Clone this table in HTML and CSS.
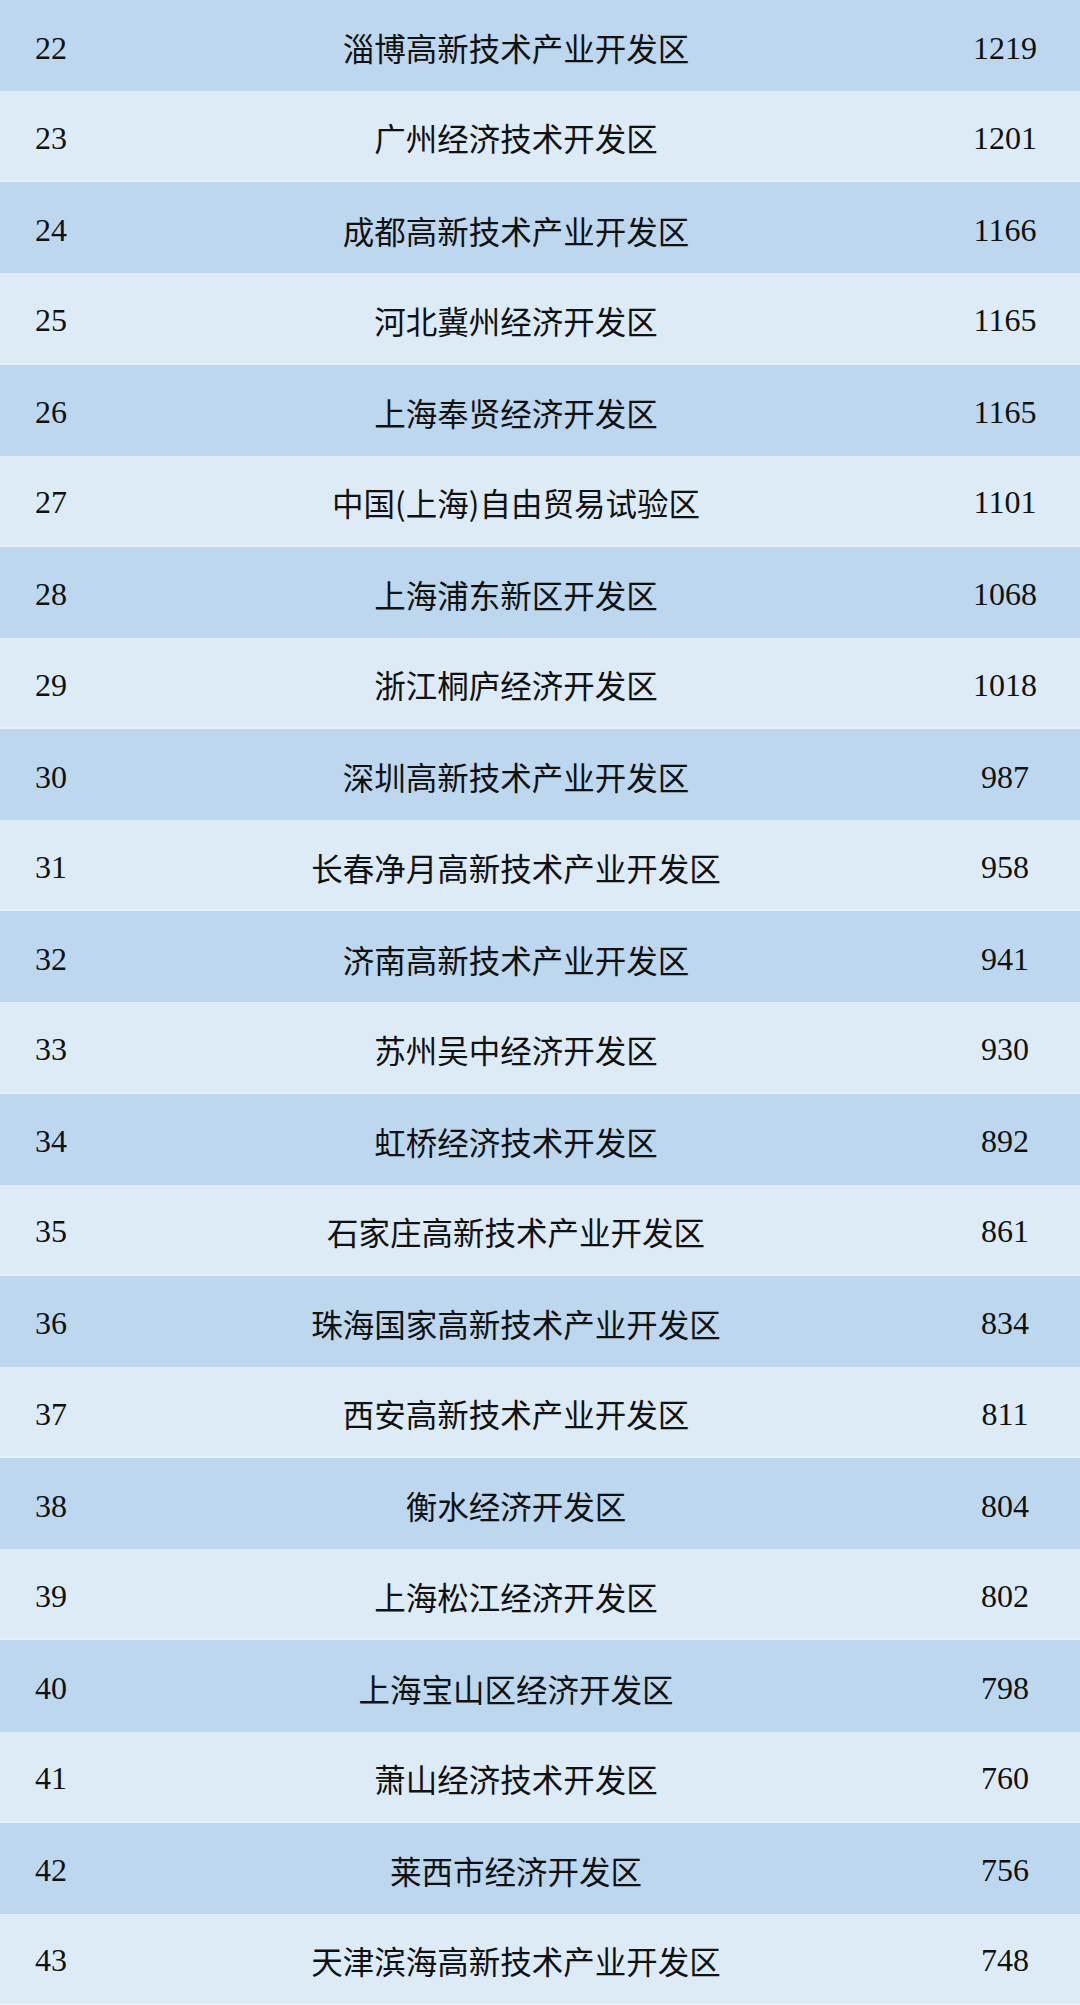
FILE: index.html
```html
<!DOCTYPE html>
<html lang="zh-CN">
<head>
<meta charset="utf-8">
<title>开发区排名</title>
<link rel="stylesheet" href="styles.css">
</head>
<body>
<div class="table">
  <div class="row dark"><span class="rank">22</span><span class="name">淄博高新技术产业开发区</span><span class="num">1219</span></div>
  <div class="row light"><span class="rank">23</span><span class="name">广州经济技术开发区</span><span class="num">1201</span></div>
  <div class="row dark"><span class="rank">24</span><span class="name">成都高新技术产业开发区</span><span class="num">1166</span></div>
  <div class="row light"><span class="rank">25</span><span class="name">河北冀州经济开发区</span><span class="num">1165</span></div>
  <div class="row dark"><span class="rank">26</span><span class="name">上海奉贤经济开发区</span><span class="num">1165</span></div>
  <div class="row light"><span class="rank">27</span><span class="name">中国(上海)自由贸易试验区</span><span class="num">1101</span></div>
  <div class="row dark"><span class="rank">28</span><span class="name">上海浦东新区开发区</span><span class="num">1068</span></div>
  <div class="row light"><span class="rank">29</span><span class="name">浙江桐庐经济开发区</span><span class="num">1018</span></div>
  <div class="row dark"><span class="rank">30</span><span class="name">深圳高新技术产业开发区</span><span class="num">987</span></div>
  <div class="row light"><span class="rank">31</span><span class="name">长春净月高新技术产业开发区</span><span class="num">958</span></div>
  <div class="row dark"><span class="rank">32</span><span class="name">济南高新技术产业开发区</span><span class="num">941</span></div>
  <div class="row light"><span class="rank">33</span><span class="name">苏州吴中经济开发区</span><span class="num">930</span></div>
  <div class="row dark"><span class="rank">34</span><span class="name">虹桥经济技术开发区</span><span class="num">892</span></div>
  <div class="row light"><span class="rank">35</span><span class="name">石家庄高新技术产业开发区</span><span class="num">861</span></div>
  <div class="row dark"><span class="rank">36</span><span class="name">珠海国家高新技术产业开发区</span><span class="num">834</span></div>
  <div class="row light"><span class="rank">37</span><span class="name">西安高新技术产业开发区</span><span class="num">811</span></div>
  <div class="row dark"><span class="rank">38</span><span class="name">衡水经济开发区</span><span class="num">804</span></div>
  <div class="row light"><span class="rank">39</span><span class="name">上海松江经济开发区</span><span class="num">802</span></div>
  <div class="row dark"><span class="rank">40</span><span class="name">上海宝山区经济开发区</span><span class="num">798</span></div>
  <div class="row light"><span class="rank">41</span><span class="name">萧山经济技术开发区</span><span class="num">760</span></div>
  <div class="row dark"><span class="rank">42</span><span class="name">莱西市经济开发区</span><span class="num">756</span></div>
  <div class="row light"><span class="rank">43</span><span class="name">天津滨海高新技术产业开发区</span><span class="num">748</span></div>
</div>
</body>
</html>
```
FILE: styles.css
```css
html, body {
  margin: 0;
  padding: 0;
  background: #ddebf7;
}

.table {
  width: 1080px;
  height: 2005px;
  display: grid;
  grid-template-rows: repeat(22, 1fr);
}

.row {
  display: grid;
  grid-template-columns: 102px 828px 150px;
  align-items: center;
  padding-top: 5px;
  box-sizing: border-box;
  color: #111;
}

.dark {
  background: #bdd7ee;
}

.light {
  background: #ddebf7;
  border-bottom: 2px solid #e7f0f9;
}

.rank, .num {
  font-family: "Liberation Serif", "Times New Roman", serif;
  font-size: 32px;
  text-align: center;
}

.name {
  font-family: "Noto Sans CJK SC", "Noto Sans", sans-serif;
  font-size: 31.5px;
  text-align: center;
  line-height: 1;
}
```
